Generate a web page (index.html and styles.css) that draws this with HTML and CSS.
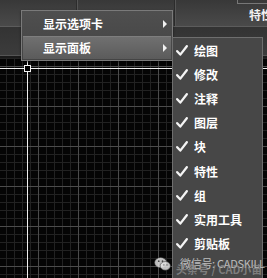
FILE: index.html
```html
<!DOCTYPE html>
<html lang="zh">
<head>
<meta charset="utf-8">
<link rel="stylesheet" href="styles.css">
</head>
<body>
<div class="app">
  <div class="ribbon">
    <div class="ribbon-top">
      <div class="panel p1"></div>
      <div class="panel p2"></div>
      <div class="panel p3">
        <div class="field"></div>
        <span class="panel-title">特性</span>
      </div>
    </div>
    <div class="ribbon-bottom"></div>
  </div>
  <div class="canvas">
    <div class="cross-h"></div>
    <div class="cross-v"></div>
    <div class="pickbox"></div>
  </div>

  <div class="menu menu-main">
    <div class="item"><span>显示选项卡</span><i class="arrow"></i></div>
    <div class="item active"><span>显示面板</span><i class="arrow"></i></div>
  </div>

  <div class="menu menu-sub">
    <div class="sitem"><svg class="check" viewBox="0 0 12 11"><path d="M1.2 6.2 L4.3 9.6 L10.8 1.2"/></svg><span>绘图</span></div>
    <div class="sitem"><svg class="check" viewBox="0 0 12 11"><path d="M1.2 6.2 L4.3 9.6 L10.8 1.2"/></svg><span>修改</span></div>
    <div class="sitem"><svg class="check" viewBox="0 0 12 11"><path d="M1.2 6.2 L4.3 9.6 L10.8 1.2"/></svg><span>注释</span></div>
    <div class="sitem"><svg class="check" viewBox="0 0 12 11"><path d="M1.2 6.2 L4.3 9.6 L10.8 1.2"/></svg><span>图层</span></div>
    <div class="sitem"><svg class="check" viewBox="0 0 12 11"><path d="M1.2 6.2 L4.3 9.6 L10.8 1.2"/></svg><span>块</span></div>
    <div class="sitem"><svg class="check" viewBox="0 0 12 11"><path d="M1.2 6.2 L4.3 9.6 L10.8 1.2"/></svg><span>特性</span></div>
    <div class="sitem"><svg class="check" viewBox="0 0 12 11"><path d="M1.2 6.2 L4.3 9.6 L10.8 1.2"/></svg><span>组</span></div>
    <div class="sitem"><svg class="check" viewBox="0 0 12 11"><path d="M1.2 6.2 L4.3 9.6 L10.8 1.2"/></svg><span>实用工具</span></div>
    <div class="sitem"><svg class="check" viewBox="0 0 12 11"><path d="M1.2 6.2 L4.3 9.6 L10.8 1.2"/></svg><span>剪贴板</span></div>
  </div>

  <div class="watermark">
    <svg class="wx" viewBox="0 0 18 15">
      <ellipse cx="7" cy="6" rx="6.5" ry="5.5"/>
      <ellipse cx="12" cy="9.5" rx="5.5" ry="4.6"/>
      <circle class="eye" cx="5" cy="4.5" r="0.9"/>
      <circle class="eye" cx="9" cy="4.5" r="0.9"/>
      <circle class="eye2" cx="10.5" cy="8.5" r="0.7"/>
      <circle class="eye2" cx="13.8" cy="8.5" r="0.7"/>
    </svg>
    <span class="wm1">微信号: CADSKILL</span>
    <span class="wm2">头条号 / CAD小苗</span>
  </div>
</div>
</body>
</html>
```

FILE: styles.css
```css
html, body {
  margin: 0;
  padding: 0;
  background: #000;
}
body {
  width: 267px;
  height: 278px;
  overflow: hidden;
  font-family: "Noto Sans CJK SC", "Noto Sans", sans-serif;
}
.app {
  position: relative;
  width: 267px;
  height: 278px;
  display: flex;
  flex-direction: column;
  overflow: hidden;
}
.ribbon {
  height: 58px;
  display: flex;
  flex-direction: column;
  flex: none;
}
.ribbon-top {
  height: 26px;
  display: flex;
  background: linear-gradient(#383838, #4a4a4a);
  border-bottom: 1px solid #5c5c5c;
}
.panel {
  height: 26px;
  border-right: 1px solid #2c2c2c;
  box-shadow: inset 1px 0 0 #555;
  overflow: hidden;
}
.p1 { width: 76px; box-shadow: none; }
.p2 { width: 97px; }
.p3 { flex: 1; border-right: none; }
.field {
  margin-left: 62px;
  height: 3px;
  border-left: 1px solid #777;
  border-bottom: 1px solid #777;
}
.panel-title {
  display: block;
  margin: 4px 0 0 74px;
  font-size: 12px;
  line-height: 14px;
  color: #f2f2f2;
  white-space: nowrap;
  font-weight: 700;
}
.ribbon-bottom {
  flex: 1;
  background: linear-gradient(#333, #3c3c3c);
  border-bottom: 2px solid #1a1a1a;
  box-shadow: inset 0 -1px 0 #555;
}
.canvas {
  flex: 1;
  position: relative;
  background-color: #050505;
  background-image:
    linear-gradient(to right, #4c4c4c 1px, transparent 1px),
    linear-gradient(to bottom, #4c4c4c 1px, transparent 1px),
    linear-gradient(to right, #222 1px, transparent 1px),
    linear-gradient(to bottom, #222 1px, transparent 1px);
  background-size: 40px 40px, 40px 40px, 8px 8px, 8px 8px;
  background-position: 38px 0, 0 8px, 6px 0, 0 0;
}
.cross-h {
  position: absolute;
  left: 0;
  right: 0;
  top: 10px;
  height: 1px;
  background: #f0f0f0;
}
.cross-v {
  position: absolute;
  left: 27px;
  top: 0;
  bottom: 0;
  width: 1px;
  background: #f0f0f0;
}
.pickbox {
  position: absolute;
  left: 24px;
  top: 7px;
  width: 5px;
  height: 5px;
  border: 1px solid #f4f4f4;
  background: #000;
}

.menu {
  position: absolute;
  box-sizing: border-box;
  color: #fff;
  font-size: 12px;
  font-weight: 700;
}
.menu-main {
  left: 21px;
  top: 10px;
  width: 152px;
  height: 51px;
  padding: 1px;
  border: 1px solid #7a7a7a;
  background: linear-gradient(#4f4f4f, #444);
  display: flex;
  flex-direction: column;
  gap: 1px;
  box-shadow: 0 1px 2px rgba(0,0,0,0.6);
}
.item {
  height: 23px;
  display: flex;
  align-items: center;
  justify-content: space-between;
  padding: 0 4px 0 20px;
}
.item.active {
  background: linear-gradient(#717171, #5b5b5b);
  box-shadow: inset 0 1px 0 #7e7e7e;
}
.arrow {
  width: 0;
  height: 0;
  border-top: 4px solid transparent;
  border-bottom: 4px solid transparent;
  border-left: 4px solid #f0f0f0;
}
.menu-sub {
  left: 172px;
  top: 37px;
  width: 91px;
  height: 260px;
  border: 1px solid #6e6e6e;
  background: #474747;
  display: flex;
  flex-direction: column;
}
.sitem {
  height: 24.2px;
  display: flex;
  align-items: center;
  padding-left: 3px;
  gap: 6px;
  flex: none;
}
.check {
  width: 12px;
  height: 11px;
  flex: none;
}
.check path {
  fill: none;
  stroke: #f4f4f4;
  stroke-width: 2.3;
  stroke-linecap: round;
  stroke-linejoin: round;
}

.watermark {
  position: absolute;
  left: 152px;
  top: 255px;
  width: 115px;
  height: 23px;
}
.wx {
  position: absolute;
  left: 2px;
  top: 2px;
  width: 17px;
  height: 14px;
}
.wx ellipse { fill: rgba(225,225,225,0.85); stroke: #333; stroke-width: 0.6; }
.wx .eye { fill: #444; }
.wx .eye2 { fill: #555; }
.wm1 {
  position: absolute;
  left: 28px;
  top: 2px;
  font-size: 11px;
  line-height: 13px;
  color: rgba(230,230,230,0.75);
  white-space: nowrap;
  letter-spacing: -0.3px;
}
.wm2 {
  position: absolute;
  left: 24px;
  top: 8px;
  font-size: 11px;
  line-height: 13px;
  font-weight: 700;
  color: rgba(150,150,150,0.7);
  white-space: nowrap;
}
```
